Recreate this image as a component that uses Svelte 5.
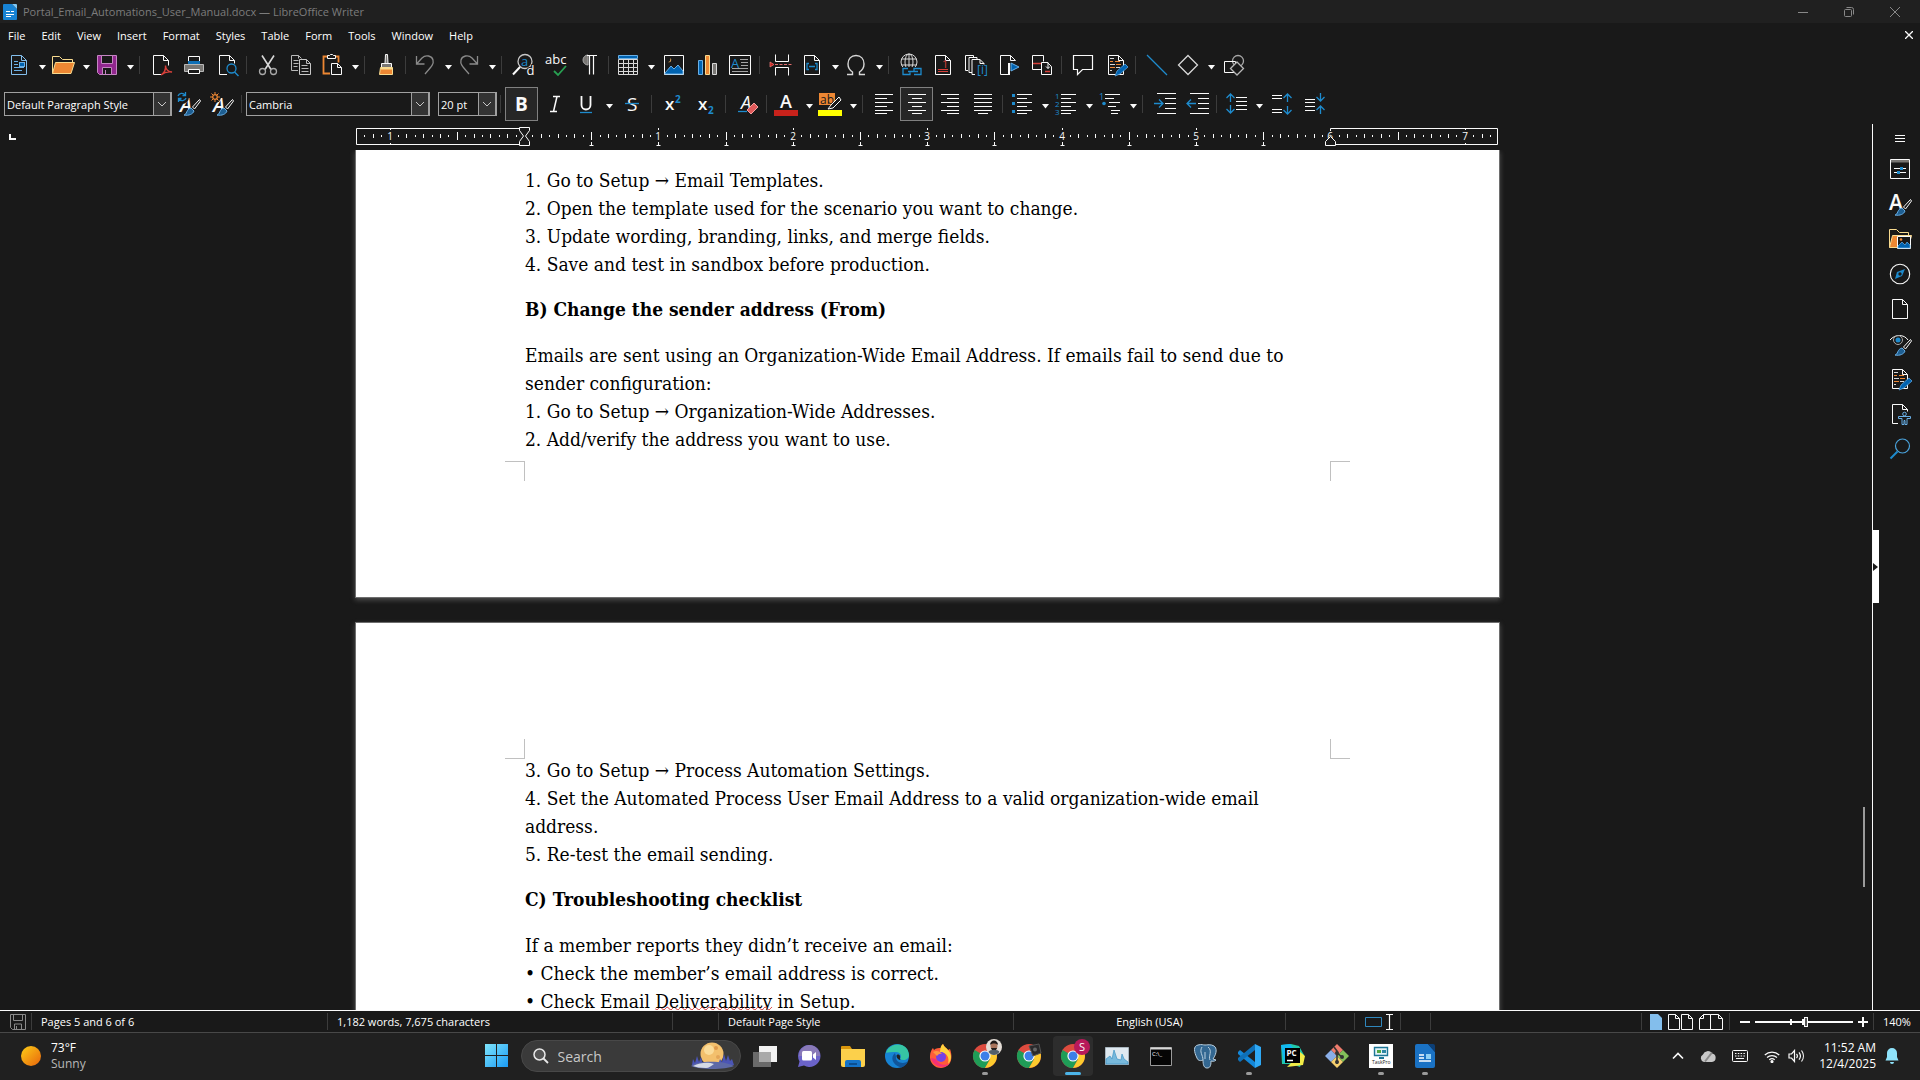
<script>
    const menus = ["File", "Edit", "View", "Insert", "Format", "Styles", "Table", "Form", "Tools", "Window", "Help"];

    const W = "#fafafa";
    const B = "#1e8bcd";
    const page = `<path d="M4.5 2.5h10l5 5v14h-15z M14.5 2.5v5h5" fill="none" stroke="${W}"/>`;
    const brush = `<path d="M22.5 7.5l-7 7.5 2 2 6-8z" fill="#191919" stroke="${W}"/><path d="M7 23c3 0 2-6 7-7l3 3c-1 3-5 5-10 4z" fill="#1e5f92" stroke="#69afe5"/>`;
    const lines = (rows) =>
        `<path d="${rows.map(([x, y, w]) => `M${x} ${y}h${w}`).join("")}" stroke="${W}" stroke-width="1.2"/>`;
    const pencil = `<path d="M11 23l2-5 8-7 3 3-8 7z" fill="#0063b1" stroke="#5aa3dc" stroke-width=".8"/>`;
    const letter = (t, x, y, size, extra = "") =>
        `<text x="${x}" y="${y}" font-size="${size}" fill="${W}" font-family="Open Sans, sans-serif" ${extra}>${t}</text>`;
    const chrome = `<circle cx="12" cy="12" r="12" fill="#dd4b3e"/><path d="M12 12L1.6 6A12 12 0 0 0 12 24l5-9z" fill="#1f9d57"/><path d="M12 7h10.9A12 12 0 0 1 12 24l5.2-9z" fill="#fdcb2e"/><circle cx="12" cy="12" r="5.6" fill="#fff"/><circle cx="12" cy="12" r="4.5" fill="#3d7fe8"/>`;

    const icons = {
        newDoc: `<path d="M4.500 2.500h10l5 5v14h-15z M14.500 2.500v5h5" fill="none" stroke="#83beec"/><path d="M7 8.500h4M7 11.500h4M7 14.500h10M7 17.500h8" stroke="#69afe5"/><rect x="12.500" y="9.500" width="5" height="4" fill="#0063b1" stroke="#69afe5"/>`,
        open: `<path d="M1.500 20.500v-17h7l3 3h10v3" fill="none" stroke="#f8db8f"/><path d="M4.500 9.500h19l-3.500 11h-18.500z" fill="#ed8733" stroke="#f8db8f"/>`,
        save: `<path d="M2.500 2.500h19v19h-17l-2-2z" fill="#92278f" stroke="#c586c3"/><path d="M6.500 2.500h11v8h-11z" fill="#191919" stroke="#c586c3"/><path d="M7.500 14.500h9v7h-9z" fill="#191919" stroke="#c586c3"/><path d="M10.500 17v5" stroke="#c586c3"/>`,
        pdf: `<path d="M12 21.500h-7.500v-19h10l5 5v5M14.500 2.500v5h5" fill="none" stroke="${W}"/><path d="M12 22c3-2 5-5 4.500-9.500 0 4 3 6.500 6.500 6.500-4-.8-8 .5-11 3z" fill="none" stroke="#d8403a" stroke-width="1.400"/>`,
        print: `<path d="M6.500 9v-5.500h11v5.500" fill="none" stroke="${W}"/><path d="M6 8h12v3h-12z" fill="#0f6fb5"/><path d="M2.500 11.500h19v7h-19z" fill="#797774" stroke="#b8b8b8"/><path d="M6.500 16.500h11v4h-11z" fill="#191919" stroke="${W}"/>`,
        preview: `<path d="M12 21.500h-7.500v-19h10l5 5v3M14.500 2.500v5h5" fill="none" stroke="${W}"/><circle cx="16.500" cy="15.500" r="4.500" fill="none" stroke="${B}" stroke-width="1.300"/><path d="M19.500 19l4 4" stroke="${B}" stroke-width="1.500"/>`,
        cut: `<path d="M6 2.500l9 14M18 2.500l-9 14" stroke="#d8d8d8" stroke-width="1.600"/><circle cx="6.500" cy="18.500" r="3" fill="none" stroke="#a8a8a8" stroke-width="1.300"/><circle cx="17.500" cy="18.500" r="3" fill="none" stroke="#a8a8a8" stroke-width="1.300"/>`,
        copy: `<path d="M9 17.500h-6.500v-15h7l3 3M4.500 7.500h5M4.500 10.500h5M4.500 13.500h4M9.500 2.500v3" fill="none" stroke="#b8b8b8"/><path d="M10.500 6.500h7l4 4v11h-11z" fill="#191919" stroke="#c8c8c8"/><path d="M17.500 6.500v4h4M12.500 12.500h6M12.500 15.500h7M12.500 18.500h7" stroke="#b8b8b8" fill="none"/>`,
        paste: `<path d="M10 20.500h-6.500v-17h15v6" fill="none" stroke="#ed8733" stroke-width="1.800"/><path d="M7.500 5.500v-3h2l1-1h2l1 1h2v3z" fill="#191919" stroke="${W}"/><path d="M11.500 10.500h6l4 4v7h-10z" fill="#191919" stroke="${W}"/><path d="M17.500 10.500v4h4" fill="none" stroke="${W}"/>`,
        clone: `<path d="M11.500 1.500h2l.5 9h-3z" fill="#797774" stroke="${W}"/><path d="M7.500 10.500h10v4h-10z" fill="#797774" stroke="${W}"/><path d="M6.500 14.500h12v7h-13z" fill="#ed8733" stroke="#f8db8f"/><path d="M7 15.500h11" stroke="#f8db8f" stroke-width="2"/>`,
        undo: `<path d="M3.500 3v8h8M4 10.500l5-5.500c4-4 10-2 11 2 1 4-1 6-8 14" fill="none" stroke="#8a8a8a" stroke-width="1.300"/>`,
        redo: `<path d="M20.500 3v8h-8M20 10.500l-5-5.500c-4-4-10-2-11 2-1 4 1 6 8 14" fill="none" stroke="#8a8a8a" stroke-width="1.300"/>`,
        find: `<circle cx="14" cy="8.500" r="7" fill="none" stroke="#c8c8c8" stroke-width="1.300"/><path d="M9 14l-7 7.500" stroke="${W}" stroke-width="2"/>${letter("a", 10, 13, 13, `style="fill:${B}"`)}${letter("d", 15.5, 22, 13, 'stroke="#191919" stroke-width="2" paint-order="stroke"')}`,
        spell: `${letter("abc", 1, 11, 13)}<path d="M10 18l4 4 8-9" fill="none" stroke="#28a052" stroke-width="1.800"/>`,
        pilcrow: `<path d="M11 12a5 5 0 0 1 0-10z" fill="#797774" stroke="#a8a8a8"/><path d="M10 2.500h10M12.500 2.500v19M16.500 2.500v19" stroke="${W}" stroke-width="1.200"/>`,
        table: `<path d="M2.500 2.500h19v3h-19z" fill="#0063b1" stroke="#69afe5"/><path d="M2.500 6.500h19v15h-19zM2.500 10.500h19M2.500 14.500h19M2.500 18.500h19M7.500 6.500v15M12.500 6.500v15M17.500 6.500v15" fill="none" stroke="#d8d8d8"/>`,
        image: `<path d="M2.500 2.500h19v19h-19z" fill="none" stroke="${W}"/><path d="M3 20l6-7 3 3 4-4 5 6v3h-18z" fill="#0063b1" stroke="#69afe5"/><path d="M8 5a2.200 2.200 0 1 1-2 4c2 0 3-2 2-4z" fill="#f0b05a"/>`,
        chart: `<path d="M3.500 7.500h4v14h-4z" fill="#0063b1" stroke="#69afe5"/><path d="M10.500 2.500h4v19h-4z" fill="#ed8733" stroke="#f8db8f"/><path d="M17.500 10.500h4v11h-4z" fill="#797774" stroke="#d8d8d8"/>`,
        textBox: `<path d="M1.500 2.500h21v19h-21z" fill="none" stroke="${W}"/>${letter("A", 3, 15, 13, `style="fill:${B}"`)}<path d="M12 6.500h8M13 9.500h7M13 12.500h7M4 15.500h16M4 18.500h16" stroke="#c8c8c8" stroke-width=".8"/>`,
        pageBreak: `<path d="M6.500 1.500v7h13v-7M6.500 22.500v-8h13v8" fill="none" stroke="${W}"/><path d="M6 11.500h17" stroke="#e06c6c" stroke-dasharray="3 1.500"/><path d="M1 9l4 2.500-4 2.500z" fill="#c8221b" stroke="#f08080" stroke-width=".7"/>`,
        field: `${page}<path d="M9 10.500h-2v6h2M15 10.500h2v6h-2M9 13.500h6" fill="none" stroke="${B}" stroke-width="1.300"/>`,
        omega: `<path d="M3 21.500h5.500v-2.500c-3-2-4.500-4.500-4.500-8 0-5 3-8.500 8-8.500s8 3.500 8 8.500c0 3.500-1.500 6-4.500 8v2.500h5.500" fill="none" stroke="#d8d8d8" stroke-width="1.400"/>`,
        link: `<g fill="none" stroke="#d8d8d8"><circle cx="11" cy="9" r="8"/><ellipse cx="11" cy="9" rx="4" ry="8"/><path d="M3.500 6h15M3.500 12h15M11 1v16"/></g><path d="M4 14h20v9h-20z" fill="#191919"/><path d="M10 15.500h-5v6h7v-2M10 18.500h10M18 15.500h5v6h-7M16 18v-2.500h2" fill="none" stroke="${B}" stroke-width="1.300"/>`,
        footnote: `${page}${letter("1", 11, 15, 11, 'style="fill:#d8403a"')}<path d="M7 16.500h10M7 18.500h10" stroke="#d8403a"/>`,
        endnote: `<path d="M4 17.500h-2.500v-15h8v2M8 19.500h-3v-15h8v2" fill="none" stroke="${W}"/><path d="M11 21.500h-3v-15h8l4 4v1M16 6.500v4h4" fill="none" stroke="${W}"/>${letter("[i]", 13, 21, 12, `style="fill:${B}"`)}`,
        bookmark: `<path d="M12 21.500h-8.500v-19h10l5 5M13.500 2.500v5h5" fill="none" stroke="${W}"/><path d="M12 10v12" stroke="${W}" stroke-width="2"/><path d="M14 10l8 4-8 4z" fill="#0063b1" stroke="#69afe5"/>`,
        crossRef: `<path d="M12 16.500h-9.500v-14h11v6" fill="none" stroke="${W}"/><path d="M3 10.500h8M15 18.500h5" stroke="#d8403a" stroke-width="1.300"/><path d="M11.500 21.500v-12h6l4 4v8z" fill="none" stroke="${W}"/><path d="M14 9.500h4v6M16 13.500l2 2 2-2" fill="none" stroke="${W}"/>`,
        comment: `<path d="M2.500 2.500h19v14h-10l-5 5v-5h-4z" fill="none" stroke="${W}" stroke-width="1.200"/>`,
        track: `${page}<path d="M6 5.500h4M6 11.500h5M6 17.500h2M12 14.500h4" stroke="#d8d8d8"/><path d="M11 8.500h5M6 8.500h3M6 14.500h5M12 11.500h5" stroke="#ed8733"/>${pencil}`,
        line: `<path d="M2 2l20 20" stroke="${B}" stroke-width="1.300"/>`,
        diamond: `<path d="M12 2.500l9.500 9.500-9.500 9.500-9.500-9.500z" fill="none" stroke="#d8d8d8" stroke-width="1.300"/>`,
        shapes: `<circle cx="16" cy="8" r="5.500" fill="none" stroke="#a8a8a8" stroke-width="1.300"/><path d="M2.500 8.500h11v11h-11z" fill="none" stroke="${W}"/><path d="M15 9l6.500 6.500-6.500 6.500-6.500-6.500z" fill="#191919" stroke="#b8b8b8" stroke-width="1.300"/>`,

        updateStyle: `${letter("A", 3, 20, 20, 'font-weight="600" font-style="italic"')}<circle cx="5" cy="5" r="7" fill="#191919"/><path d="M1 4a4 4 0 0 1 7-1M9 6a4 4 0 0 1-7 1M8.500 0v3.500h-3M1.500 10v-3.500h3" fill="none" stroke="${B}" stroke-width="1.300"/>${brush}`,
        newStyle: `${letter("A", 3, 20, 20, 'font-weight="600" font-style="italic"')}<circle cx="5" cy="5" r="6" fill="#191919"/><circle cx="5" cy="5" r="2.300" fill="none" stroke="#ed8733" stroke-width="1.300"/><path d="M5 0v2M5 8v2M0 5h2M8 5h2M1.500 1.500l1.500 1.500M7 7l1.500 1.500M8.500 1.500l-1.500 1.500M3 7l-1.500 1.500" stroke="#ed8733"/>${brush}`,
        bold: letter("B", 5, 19, 19, 'font-weight="700"'),
        italic: `<path d="M10 4.500h7M7 19.500h7M14 4.500l-3.500 15" stroke="${W}" stroke-width="1.500" fill="none"/>`,
        underline: `<path d="M7.500 4v9c0 6 9 6 9 0v-9" fill="none" stroke="${W}" stroke-width="1.800"/><path d="M6 20.500h12" stroke="${B}" stroke-width="1.300"/>`,
        strike: `${letter("S", 7, 19, 19)}<path d="M5 11.500h14" stroke="${B}" stroke-width="1.300"/>`,
        sup: `${letter("x", 4, 18, 17, 'font-weight="600"')}${letter("2", 14, 11, 10, `style="fill:${B}" font-weight="700"`)}`,
        sub: `${letter("x", 4, 18, 17, 'font-weight="600"')}${letter("2", 14, 22, 10, `style="fill:${B}" font-weight="700"`)}`,
        clear: `${letter("A", 6, 17, 18, 'font-style="italic"')}<path d="M3 19.500h9" stroke="${B}" stroke-width="1.300"/><path d="M12 18l7-7 4 4-7 7z" fill="#e05a5a" stroke="#f4a0a0"/>`,
        fontColor: `${letter("A", 6, 16, 18, 'font-weight="600"')}<path d="M0 18h24v6h-24z" fill="#c8221b"/>`,
        highlight: `<path d="M1 1h16v12h-16z" fill="#ed8733"/>${letter("ab", 2, 12, 12, 'style="fill:#191919"')}<path d="M21 5l-8 8-3 4 5-1 8-8z" fill="#191919" stroke="${W}"/><path d="M0 18h24v6h-24z" fill="#ffff00"/>`,
        alignLeft: lines([[3, 2.5, 18], [3, 6.5, 12], [3, 10.5, 18], [3, 14.5, 12], [3, 18.5, 18], [3, 21.5, 12]]),
        alignCenter: lines([[3, 2.5, 18], [7, 6.5, 10], [3, 10.5, 18], [7, 14.5, 10], [3, 18.5, 18], [7, 21.5, 10]]),
        alignRight: lines([[3, 2.5, 18], [9, 6.5, 12], [3, 10.5, 18], [9, 14.5, 12], [3, 18.5, 18], [9, 21.5, 12]]),
        justify: lines([[3, 2.5, 18], [3, 6.5, 18], [3, 10.5, 18], [3, 14.5, 18], [3, 18.5, 18], [7, 21.5, 10]]),
        bullets: `<path d="M2 2h3v3h-3zM2 10h3v3h-3zM2 18h3v3h-3z" fill="${B}"/>${lines([[7, 2.5, 15], [7, 6.5, 10], [7, 10.5, 15], [7, 14.5, 10], [7, 18.5, 15], [7, 21.5, 10]])}`,
        numbering: `${letter("1", 1, 7, 8, `style="fill:${B}"`)}${letter("2", 1, 15, 8, `style="fill:${B}"`)}${letter("3", 1, 23, 8, `style="fill:${B}"`)}${lines([[7, 2.5, 15], [7, 6.5, 10], [7, 10.5, 15], [7, 14.5, 10], [7, 18.5, 15], [7, 21.5, 10]])}`,
        outline: `${letter("1", 1, 8, 9, `style="fill:${B}"`)}<circle cx="6" cy="11.500" r="1.800" fill="${B}"/>${lines([[7, 2.5, 15], [7, 6.5, 9], [11, 10.5, 11], [10, 14.5, 8], [13, 18.5, 9], [13, 21.5, 7]])}`,
        indent: `${lines([[5, 1.5, 19], [13, 6.5, 11], [13, 11.5, 11], [13, 16.5, 11], [5, 21.5, 19]])}<path d="M2 11.500h9M7 7.500l4 4-4 4" fill="none" stroke="${B}" stroke-width="1.300"/>`,
        outdent: `${lines([[5, 1.5, 19], [13, 6.5, 11], [13, 11.5, 11], [13, 16.5, 11], [5, 21.5, 19]])}<path d="M2 11.500h9M6 7.500l-4 4 4 4" fill="none" stroke="${B}" stroke-width="1.300"/>`,
        lineSpacing: `${lines([[12, 5.5, 11], [12, 9.5, 11], [12, 13.5, 11], [12, 17.5, 11]])}<path d="M6.500 2v8M2.500 6l4-4 4 4M6.500 13v8M2.500 17l4 4 4-4" fill="none" stroke="${B}" stroke-width="1.300"/>`,
        spaceMore: `${lines([[2, 3.5, 10], [2, 6.5, 10], [2, 17.5, 10], [2, 20.5, 10]])}<path d="M17.500 2v8M13.500 6l4-4 4 4M17.500 14v8M13.500 18l4 4 4-4" fill="none" stroke="${B}" stroke-width="1.300"/>`,
        spaceLess: `${lines([[2, 7.5, 10], [2, 10.5, 10], [2, 14.5, 10], [2, 18.5, 10]])}<path d="M17.500 1v8M13.500 5l4 4 4-4M17.500 14v8M13.500 18l4-4 4 4" fill="none" stroke="${B}" stroke-width="1.300"/>`,

        properties: `<path d="M2.500 2.500h19v19h-19z" fill="none" stroke="${W}"/><path d="M3 3h18v2.500h-18z" fill="#797774"/><path d="M6 11.500h12M6 15.500h12" stroke="${W}"/><path d="M12 10h3v3h-3zM9 14h3v3h-3z" fill="${B}"/>`,
        styles: `${letter("A", 1, 18, 21, 'font-weight="600"')}${brush}`,
        gallery: `<path d="M1.500 20.500v-18h7l3 3h9v3" fill="none" stroke="#f8db8f"/><path d="M4.500 8.500h19l-3 12h-19z" fill="#ed8733" stroke="#f8db8f"/><path d="M9.500 9.500h13v12h-13z" fill="#191919" stroke="${W}"/><path d="M10 19l4-4 3 3 2-3 3 3v3h-12z" fill="#0063b1" stroke="#69afe5" stroke-width=".7"/><circle cx="13" cy="12.500" r="1.300" fill="#ed8733"/>`,
        navigator: `<circle cx="12" cy="12" r="9.700" fill="none" stroke="${W}" stroke-width="1.100"/><path d="M17 7l-3 7-7 3 2-7z" fill="#1e8bcd"/><circle cx="12" cy="12" r="1.700" fill="#191919"/>`,
        pageIcon: page,
        inspector: `<path d="M2 8c5-6 14-6 18 0" fill="none" stroke="${W}"/><circle cx="10" cy="8" r="4.500" fill="none" stroke="#a8a8a8"/><circle cx="10" cy="8" r="2.500" fill="${B}"/>${brush}`,
        access: `<path d="M10 21.500h-5.500v-19h10l5 5v2M14.500 2.500v5h5" fill="none" stroke="${W}"/><circle cx="16.500" cy="12" r="1.800" fill="#191919" stroke="#69afe5"/><path d="M10.500 14.500h12v2h-3.500v6h-2v-4h-1v4h-2v-6h-3.500z" fill="#191919" stroke="#69afe5"/>`,
        search: `<circle cx="14.500" cy="9" r="7" fill="none" stroke="#4aa3dc" stroke-width="1.200"/><path d="M9.500 14.500l-7 7" stroke="${B}" stroke-width="2"/>`,

        taskView: `<path d="M0 8h18v15h-18z" fill="#6a6a6a"/><path d="M6 2h18v16h-18z" fill="#f2f2f2"/><path d="M6 8h12v10h-12z" fill="#a9a9a9"/>`,
        chat: `<path d="M12 1a11 11 0 1 1-5 20.500l-6 1.500 1.500-5.500a11 11 0 0 1 9.500-16.500z" fill="#6b63c9"/><path d="M12 1a11 11 0 0 1 11 11h-21a11 11 0 0 1 10-11z" fill="#8a7ab8"/><rect x="5" y="7" width="10" height="9.500" rx="1.500" fill="#fff"/><path d="M16 10.500l3-2.500v8l-3-2.500z" fill="#fff"/>`,
        explorer: `<path d="M0 3a1 1 0 0 1 1-1h8l2 3h-11z" fill="#d9960c"/><path d="M0 5h24v16a2 2 0 0 1-2 2h-20a2 2 0 0 1-2-2z" fill="#fcd04b"/><path d="M4 23v-5a2 2 0 0 1 2-2h12a2 2 0 0 1 2 2v5z" fill="#1473c8"/><path d="M8 19h8v2h-8z" fill="#0b4f91"/>`,
        edge: `<circle cx="12" cy="12" r="12" fill="#1783d4"/><path d="M1 9c3-11 22-12 23 2 0 5-6 6-9 4 2-2 1-7-4-7-4 0-8 0-10 1z" fill="#36c6a4"/><path d="M10 9c-5 4-3 12 6 14.500 3-.8 6-3 7-6-5 3-13 1-12-5z" fill="#10559a"/><path d="M11.500 12c0-2 3-2 3.500 0s-.5 3 .5 4c-2 0-4-2-4-4z" fill="#202020"/>`,
        firefox: `<path d="M12 24a11 11 0 0 1-11-12c0-4 2-7 3-8l1 2c2-2 5-2 7-2 0-2 1-3 2-4 1 3 4 4 5 6l2-1c3 8 2 18-9 19z" fill="#ff5c38"/><path d="M14 0c1 3 4 4 5 6 4 4 4 10 0 14 2-7-2-12-8-11 0-5 1-8 3-9z" fill="#ffd23c"/><path d="M2 14c2 9 14 12 19 5-5 4-12 1-14-4z" fill="#f52f78"/><circle cx="12" cy="13" r="5" fill="#7542e5"/><path d="M4 8c3-2 7-1 9 2-3-1-4 1-5 2z" fill="#ff9640"/>`,
        chromeUser: `${chrome}<circle cx="21" cy="3" r="8" fill="#e4ddd6"/><circle cx="21" cy="2" r="3.500" fill="#a9745b"/><path d="M17 1c0-6 8-6 8 0-2-2-6-2-8 0zM18 4c1 4 5 4 6 0z" fill="#201a18"/><path d="M15.500 8c1-3 10-3 11 0-3 4-8 4-11 0z" fill="#53606a"/>`,
        chromeBox: `${chrome}<path d="M12 2l10-2 2 9-8 3z" fill="#2a2a2c" stroke="#555"/><circle cx="18" cy="5.500" r="2" fill="#666"/>`,
        chromeS: `${chrome}<circle cx="21" cy="3" r="8" fill="#b8195a"/>${letter("S", 18, 7, 11)}`,
        perf: `<path d="M.5 3.500h23v17h-23z" fill="#dfe9f0" stroke="#a9b6bf"/><path d="M1 20v-5l4-3 2 3 2-9 3 9 4 1 1-6 2 5 4 3v2z" fill="#78b9dc" stroke="#3d93c4" stroke-width=".7"/>`,
        cmd: `<path d="M1.500 3.500h21v18h-21z" fill="#050505" stroke="#9a9a9a"/><path d="M1.500 3.500h21v2h-21z" fill="#d8d8d8"/>${letter("C:\\_", 3, 12, 6)}`,
        postgres: `<path d="M5 1c4-1 5 0 7 0s6-1 9 1 3 7-1 13l3 1c-2 2-4 1-5 1 0 5-1 7-4 7s-4-3-4-8c-2 1-5 1-6-2-3-6-4-12 1-13z" fill="#336791" stroke="#b9cfdf"/><path d="M9 3c-3 5 1 8 1 13M15 3c5 4 0 9 2 13M12 8v7" fill="none" stroke="#b9cfdf"/>`,
        vscode: `<path d="M1 8l2-2 15 12v6l-17-14z" fill="#1387d8"/><path d="M1 16l2 2 15-12v-6l-17 14z" fill="#0e70b8"/><path d="M18 0l6 3v18l-6 3z" fill="#2fa9f5"/>`,
        pycharm: `<path d="M0 1l10-1 8 2 5 9-4 12-9-3-9 0z" fill="#21c9a8"/><path d="M0 1l9-1 4 5-10 14z" fill="#12b8f0"/><path d="M19 8l5 4-2 9-16 2 4-4z" fill="#f2ec47"/><path d="M4 4h15v15h-15z" fill="#000"/>${letter("PC", 5.5, 12, 8, 'font-weight="700"')}<path d="M6 16.500h6" stroke="#fff" stroke-width="1.500"/>`,
        git: `<path d="M12 0l6 6-6 6-6-6z" fill="#ee7b6c"/><path d="M6 6l6 6-6 6-6-6z" fill="#8aaee8"/><path d="M18 6l6 6-6 6-6-6z" fill="#83c05a"/><path d="M12 12l6 6-6 6-6-6z" fill="#f5cf6d"/><path d="M9 3l3 4v13M12 9l5 4" stroke="#333" stroke-width="1.600" fill="none"/><circle cx="12" cy="9" r="2" fill="#333"/><circle cx="12" cy="18" r="2" fill="#333"/><circle cx="17" cy="13" r="2" fill="#333"/>`,
        taskPro: `<path d="M0 0h24v24h-24z" fill="#fff"/><path d="M5.500 3.500h13v8h-13z" fill="#e4f3f7" stroke="#1d7696" stroke-width="1.400"/><path d="M8 6h4v3h-4z" fill="#52a744"/><path d="M13 6h4v3h-4z" fill="#2d86a4"/><path d="M10 14h5" stroke="#1d7696" stroke-width="2"/><text x="3" y="20" font-size="5" font-family="Open Sans, sans-serif" fill="#222">TaskPro</text>`,
        writer: `<path d="M2 2a2 2 0 0 1 2-2h11l7 8v14a2 2 0 0 1-2 2h-16a2 2 0 0 1-2-2z" fill="#1a72c4"/><path d="M15 0h5a2 2 0 0 1 2 2v6z" fill="#0c3f77"/><path d="M6 11h5M6 14h5M6 17h12" stroke="#fff" stroke-width="1.500"/><path d="M13 10h5v5h-5z" fill="#8fd0f5"/>`,
    };

    const sep = { sep: true };
    const item = (icon, label, opts = {}) => ({ icon, label, ...opts });
    const drop = { drop: true };

    const standardBar = [
        item("newDoc", "New", drop), item("open", "Open", drop), item("save", "Save", drop), sep,
        item("pdf", "Export as PDF"), item("print", "Print"), item("preview", "Print Preview"), sep,
        item("cut", "Cut"), item("copy", "Copy"), item("paste", "Paste", drop), sep,
        item("clone", "Clone Formatting"), sep,
        item("undo", "Undo", drop), item("redo", "Redo", drop), sep,
        item("find", "Find and Replace"), item("spell", "Spelling"), item("pilcrow", "Formatting Marks"), sep,
        item("table", "Insert Table", drop), item("image", "Insert Image"), item("chart", "Insert Chart"), item("textBox", "Insert Text Box"), sep,
        item("pageBreak", "Insert Page Break"), item("field", "Insert Field", drop), item("omega", "Special Character", drop), sep,
        item("link", "Insert Hyperlink"), item("footnote", "Insert Footnote"), item("endnote", "Insert Endnote"), item("bookmark", "Insert Bookmark"), item("crossRef", "Insert Cross-reference"), sep,
        item("comment", "Insert Comment"), item("track", "Track Changes"), sep,
        item("line", "Insert Line"), item("diamond", "Basic Shapes", drop), item("shapes", "Show Draw Functions"),
    ];

    const formatBar = [
        item("bold", "Bold", { active: true }), item("italic", "Italic"), item("underline", "Underline", drop), item("strike", "Strikethrough"), sep,
        item("sup", "Superscript"), item("sub", "Subscript"), sep,
        item("clear", "Clear Formatting"), sep,
        item("fontColor", "Font Color", drop), item("highlight", "Highlighting", drop), sep,
        item("alignLeft", "Align Left"), item("alignCenter", "Align Center", { active: true }), item("alignRight", "Align Right"), item("justify", "Justified"), sep,
        item("bullets", "Bullets", drop), item("numbering", "Numbering", drop), item("outline", "Outline", drop), sep,
        item("indent", "Increase Indent"), item("outdent", "Decrease Indent"), sep,
        item("lineSpacing", "Line Spacing", drop), item("spaceMore", "Increase Paragraph Spacing"), item("spaceLess", "Decrease Paragraph Spacing"),
    ];

    const styleBar = [item("updateStyle", "Update Style"), item("newStyle", "New Style")];

    const sidebar = [
        ["properties", "Properties"], ["styles", "Styles"], ["gallery", "Gallery"], ["navigator", "Navigator"],
        ["pageIcon", "Page"], ["inspector", "Style Inspector"], ["track", "Manage Changes"],
        ["access", "Accessibility Check"], ["search", "Find"],
    ];

    const apps = [
        ["taskView", "Task View"], ["chat", "Chat"], ["explorer", "File Explorer"], ["edge", "Edge"],
        ["firefox", "Firefox"], ["chromeUser", "Chrome", "run"], ["chromeBox", "Chrome"], ["chromeS", "Chrome", "current"],
        ["perf", "Performance Monitor"], ["cmd", "Command Prompt"], ["postgres", "pgAdmin"], ["vscode", "VS Code", "run"],
        ["pycharm", "PyCharm"], ["git", "Git"], ["taskPro", "TaskPro", "run"], ["writer", "LibreOffice Writer", "run"],
    ];

    // Ruler: 134.4px per inch at 140%, sixteen ticks to the inch
    const inch = 134.4;
    const zero = 168;
    const ticks = [];
    for (let i = -19; i <= 115; i++) {
        if (i === 0 || i === 96) continue;
        const x = Math.round(zero + (i * inch) / 16) + 0.5;
        ticks.push({ x, kind: i % 16 === 0 ? "inch" : i % 8 === 0 ? "half" : i % 2 === 0 ? "eighth" : "dot" });
    }
    const numbers = [-1, 1, 2, 3, 4, 5, 6, 7].map((n) => ({ n: Math.abs(n), x: Math.round(zero + n * inch) }));
    const tabs = Array.from({ length: 11 }, (_, i) => Math.round(zero + ((i + 1) * inch) / 2) + 0.5);

    let zoom = 52;
</script>

{#snippet glyph(name)}
    <svg class="glyph" width="24" height="24" viewBox="0 0 24 24" aria-hidden="true">{@html icons[name]}</svg>
{/snippet}

{#snippet tools(items)}
    {#each items as t}
        {#if t.sep}
            <span class="sep"></span>
        {:else if t.drop}
            <div class="split">
                <button class="split-main" aria-label={t.label}>{@render glyph(t.icon)}</button>
                <button class="split-arrow" aria-label="{t.label} options">
                    <svg width="7" height="5" viewBox="0 0 7 5"><path d="M0 0h7l-3.500 4.500z" fill="#fafafa" /></svg>
                </button>
            </div>
        {:else}
            <button class="tool" class:active={t.active} aria-label={t.label}>{@render glyph(t.icon)}</button>
        {/if}
    {/each}
{/snippet}

{#snippet chevron()}
    <span class="combo-arrow">
        <svg width="10" height="6" viewBox="0 0 10 6"><path d="M1 1l4 4 4-4" fill="none" stroke="#c8c8c8" /></svg>
    </span>
{/snippet}

<div class="window">
    <header class="titlebar">
        <svg class="app-icon" width="16" height="18" viewBox="0 0 16 18">
            <path d="M1 2a1 1 0 0 1 1-1h8l5 5v10a1 1 0 0 1-1 1h-12a1 1 0 0 1-1-1z" fill="#1783d4" />
            <path d="M10 1h4a1 1 0 0 1 1 1v4z" fill="#7fc8f5" />
            <path d="M4 8.500h4M4 11.500h8M4 13.500h5M9 8.500h3" stroke="#fff" />
        </svg>
        <span class="title">Portal_Email_Automations_User_Manual.docx — LibreOffice Writer</span>
        <div class="controls">
            <button aria-label="Minimize"><svg width="10" height="10"><path d="M0 5.500h10" stroke="#888" /></svg></button>
            <button aria-label="Restore">
                <svg width="10" height="10" fill="none" stroke="#888"><rect x=".5" y="2.500" width="7" height="7" rx="1" /><path d="M2.500.500h5a2 2 0 0 1 2 2v5" /></svg>
            </button>
            <button aria-label="Close"><svg width="10" height="10"><path d="M0 0l10 10M10 0l-10 10" stroke="#888" /></svg></button>
        </div>
    </header>

    <nav class="menubar">
        {#each menus as m}
            <button>{m}</button>
        {/each}
        <button class="doc-close" aria-label="Close document">
            <svg width="8" height="8"><path d="M0 0l8 8M8 0l-8 8" stroke="#fafafa" stroke-width="1.300" /></svg>
        </button>
    </nav>

    <div class="toolbar">{@render tools(standardBar)}</div>

    <div class="toolbar formatting">
        <div class="combo style-combo">
            <select aria-label="Paragraph style"><option>Default Paragraph Style</option></select>
            {@render chevron()}
        </div>
        {@render tools(styleBar)}
        <span class="sep"></span>
        <div class="combo font-combo">
            <select aria-label="Font name"><option>Cambria</option></select>
            {@render chevron()}
        </div>
        <div class="combo size-combo">
            <select aria-label="Font size"><option>20 pt</option></select>
            {@render chevron()}
        </div>
        <span class="sep"></span>
        {@render tools(formatBar)}
    </div>

    <div class="workspace">
        <main class="editor">
            <div class="ruler">
                <svg class="tab-type" width="7" height="6"><path d="M1 0v5h6" fill="none" stroke="#fafafa" stroke-width="2" /></svg>
                <svg class="scale" width="1143" height="26" viewBox="0 0 1143 26">
                    <path d="M169 4.500h-168.500v16h168.500M974.500 20.500h167v-16h-167v10" fill="none" stroke="#fafafa" />
                    {#each ticks as t}
                        {#if t.kind === "inch"}
                            <path d="M{t.x} 4v2M{t.x} 19v2" stroke="#fafafa" />
                        {:else if t.kind === "half"}
                            <path d="M{t.x} 8v8" stroke="#fafafa" />
                        {:else if t.kind === "eighth"}
                            <path d="M{t.x} 10v4" stroke="#fafafa" />
                        {:else}
                            <path d="M{t.x} 11v2" stroke="#fafafa" />
                        {/if}
                    {/each}
                    {#each numbers as n}
                        <text x={n.x} y="16" class="num">{n.n}</text>
                    {/each}
                    {#each tabs as x}
                        <path d="M{x} 18v3M{x - 2} 21.500h4" stroke="#fafafa" />
                    {/each}
                    <path d="M163.500 3.500h10v3l-4 5.500 4 5.500v4h-10v-4l4-5.500-4-5.500z" fill="#191919" stroke="#fafafa" />
                    <path d="M969.500 21.500v-4l5-5 5 5v4z" fill="#191919" stroke="#fafafa" />
                </svg>
            </div>

            <div class="pages">
                <article class="sheet first">
                    <div class="text">
                        <p>
                            1. Go to Setup → Email Templates.<br />
                            2. Open the template used for the scenario you want to change.<br />
                            3. Update wording, branding, links, and merge fields.<br />
                            4. Save and test in sandbox before production.
                        </p>
                        <h2>B) Change the sender address (From)</h2>
                        <p>
                            Emails are sent using an Organization-Wide Email Address. If emails fail to send due to<br />
                            sender configuration:<br />
                            1. Go to Setup → Organization-Wide Addresses.<br />
                            2. Add/verify the address you want to use.
                        </p>
                    </div>
                    <div class="marks bottom"><span></span><span></span></div>
                </article>
                <article class="sheet second">
                    <div class="marks top"><span></span><span></span></div>
                    <div class="text">
                        <p>
                            3. Go to Setup → Process Automation Settings.<br />
                            4. Set the Automated Process User Email Address to a valid organization-wide email<br />
                            address.<br />
                            5. Re-test the email sending.
                        </p>
                        <h2>C) Troubleshooting checklist</h2>
                        <p>
                            If a member reports they didn’t receive an email:<br />
                            • Check the member’s email address is correct.<br />
                            • Check Email <span class="misspelt">Deliverability</span> in Setup.
                        </p>
                    </div>
                </article>
                <div class="scroll-thumb"></div>
            </div>
        </main>

        <aside class="sidebar">
            <button class="grip" aria-label="Hide sidebar"><svg width="5" height="8"><path d="M0 0l5 4-5 4z" fill="#191919" /></svg></button>
            <button class="deck-menu" aria-label="Sidebar settings"><svg width="10" height="8"><path d="M0 .500h10M0 3.500h10M0 6.500h10" stroke="#fafafa" /></svg></button>
            {#each sidebar as [icon, label]}
                <button class="deck" aria-label={label}>{@render glyph(icon)}</button>
            {/each}
        </aside>
    </div>

    <footer class="status">
        <span class="cell save-state">
            <svg width="16" height="16" fill="none" stroke="#8a8a8a"><path d="M.5.500h15v15h-13l-2-2zM3.500.500v6h9v-6M4.500 15v-5h7v5M6.500 12v3" /></svg>
        </span>
        <span class="cell">Pages 5 and 6 of 6</span>
        <span class="cell">1,182 words, 7,675 characters</span>
        <span class="cell"></span>
        <span class="cell">Default Page Style</span>
        <span class="cell center">English (USA)</span>
        <span class="cell"></span>
        <span class="cell insert-mode">
            <svg width="30" height="18" viewBox="0 0 30 18"><path d="M.5 4.500h16v9h-16z" fill="none" stroke="#2f87bd" /><path d="M21 1.500h7M21 16.500h7M24.500 2v14" stroke="#fafafa" stroke-width="1.200" /></svg>
        </span>
        <span class="cell"></span>
        <span class="cell"></span>
        <span class="cell views">
            <button aria-label="Single-page view"><svg width="12" height="16"><path d="M0 0h8l4 4v12h-12z" fill="#83beec" /></svg></button>
            <button aria-label="Multiple-page view">
                <svg width="25" height="16" fill="none" stroke="#fafafa"><path d="M.5.500h7l4 4v11h-11zM7.500.500v4h4M13.500.500h7l4 4v11h-11zM20.500.500v4h4" /></svg>
            </button>
            <button aria-label="Book view">
                <svg width="24" height="16" fill="none" stroke="#fafafa"><path d="M11.500.500h-7l-4 4v11h11zM4.500.500v4h-4M11.500.500h8l4 4v11h-12zM19.500.500v4h4" /></svg>
            </button>
        </span>
        <span class="cell zoom">
            <button aria-label="Zoom out"><svg width="10" height="10"><path d="M0 5h10" stroke="#fafafa" stroke-width="2" /></svg></button>
            <input type="range" aria-label="Zoom" min="0" max="100" bind:value={zoom} />
            <button aria-label="Zoom in"><svg width="10" height="10"><path d="M0 5h10M5 0v10" stroke="#fafafa" stroke-width="2" /></svg></button>
        </span>
        <span class="cell percent">140%</span>
    </footer>

    <div class="taskbar">
        <button class="weather">
            <svg width="20" height="20">
                <defs><linearGradient id="sun" x1="0" y1="0" x2="1" y2="1"><stop offset="0" stop-color="#fdcf17" /><stop offset="1" stop-color="#e8640c" /></linearGradient></defs>
                <circle cx="10" cy="10" r="10" fill="url(#sun)" />
            </svg>
            <span><b>73°F</b><small>Sunny</small></span>
        </button>

        <div class="dock">
            <button class="app" aria-label="Start">
                <svg width="24" height="24">
                    <defs><linearGradient id="win" x1="0" y1="0" x2="1" y2="1"><stop offset="0" stop-color="#7ee4fb" /><stop offset="1" stop-color="#1a9bf5" /></linearGradient></defs>
                    <path d="M0 0h11v11h-11zM12 0h11v11h-11zM0 12h11v11h-11zM12 12h11v11h-11z" fill="url(#win)" />
                </svg>
            </button>
            <label class="search">
                <svg width="16" height="16"><circle cx="6.500" cy="6.500" r="5.500" fill="#555" stroke="#e8e8e8" stroke-width="1.500" /><path d="M10.500 10.500l4.500 4.500" stroke="#e8e8e8" stroke-width="1.800" /></svg>
                <input type="text" placeholder="Search" aria-label="Search" />
                <svg width="44" height="28" viewBox="0 0 44 28">
                    <circle cx="21" cy="12" r="11.500" fill="#f3c06d" />
                    <circle cx="18" cy="8" r="5" fill="#fbdc9a" /><circle cx="25" cy="6" r="2" fill="#e09a4c" /><circle cx="27" cy="15" r="2" fill="#e3a558" />
                    <path d="M1 23l1-6 2 4 2-7 2 6 2-5 2 8zM27 23l2-6 2 3 2-8 2 7 2-6 2 6 2-2 2 6z" fill="#4b55b5" />
                    <path d="M0 24c8-6 34-5 43 0-9 4-34 4-43 0z" fill="#5d69a6" /><path d="M2 24c8-4 16-4 21-2-3 2-5 4-8 4-6 0-10-1-13-2z" fill="#d5dae6" />
                </svg>
            </label>
            {#each apps as [icon, label, state]}
                <button class="app {state ?? ''}" aria-label={label}>{@render glyph(icon)}</button>
            {/each}
        </div>

        <div class="tray">
            <button aria-label="Hidden icons"><svg width="12" height="8"><path d="M1 6.500l5-5 5 5" fill="none" stroke="#fafafa" stroke-width="1.600" /></svg></button>
            <button aria-label="OneDrive"><svg width="16" height="12"><path d="M4 12a4 4 0 0 1-1-7.500 5 5 0 0 1 9-1 4.300 4.300 0 0 1 0 8.500z" fill="#c8c8c8" /><path d="M5 11.500l7-9" stroke="#8a8a8a" stroke-width="2" /></svg></button>
            <button aria-label="Keyboard"><svg width="16" height="12" fill="none" stroke="#fafafa"><rect x=".5" y=".5" width="15" height="11" rx="1" /><path d="M3 3.500h10M3 6h10" stroke-dasharray="1.500 1.300" /><path d="M4 8.500h8" /></svg></button>
            <button class="net" aria-label="Network and sound">
                <svg width="16" height="13" fill="none" stroke="#fafafa" stroke-width="1.200"><path d="M.8 5a10.500 10.500 0 0 1 14.400 0M3 7.500a7.500 7.500 0 0 1 10 0M5.300 9.800a4 4 0 0 1 5.400 0" /><circle cx="8" cy="11.500" r="1" fill="#fafafa" /></svg>
                <svg width="17" height="14" fill="none" stroke="#fafafa" stroke-width="1.200"><path d="M1 5h2.500l3-3.500v11l-3-3.500h-2.500zM8.500 5a3 3 0 0 1 0 4M11 3.300a6 6 0 0 1 0 7.400M13.500 1.500a9 9 0 0 1 0 11" /></svg>
            </button>
            <button class="clock"><span>11:52 AM</span><span>12/4/2025</span></button>
            <button aria-label="Notifications"><svg width="14" height="16"><path d="M7 0a5 5 0 0 1 5 5v4l1.500 3.500h-13l1.500-3.500v-4a5 5 0 0 1 5-5zM5 14h4a2 2 0 0 1-4 0z" fill="#8fe3fb" /></svg></button>
        </div>
    </div>
</div>

<style>
    :global(body) {
        margin: 0;
        background: #191919;
    }

    .window {
        display: flex;
        flex-direction: column;
        height: 100vh;
        overflow: hidden;
        background: #191919;
        color: #fff;
        font-family: "Open Sans", "Noto Sans", sans-serif;
        font-size: 11px;
    }

    button {
        padding: 0;
        border: 0;
        background: none;
        color: inherit;
        font: inherit;
    }

    svg {
        display: block;
        flex: none;
    }

    .glyph {
        overflow: visible;
    }

    .titlebar {
        display: flex;
        align-items: center;
        height: 23px;
        padding-left: 2px;
        background: #202020;
        color: #7c7c7c;
    }

    .title {
        margin-left: 5px;
        white-space: nowrap;
    }

    .controls {
        display: flex;
        margin-left: auto;
        padding-right: 2px;
    }

    .controls button {
        display: grid;
        place-items: center;
        width: 46px;
        height: 20px;
    }

    .menubar {
        display: flex;
        height: 24px;
    }

    .menubar button {
        padding: 0 8px;
    }

    .menubar .doc-close {
        margin-left: auto;
        padding-right: 7px;
    }

    /* Toolbars */
    .toolbar {
        display: flex;
        align-items: center;
        height: 36px;
        padding-left: 4px;
    }

    .formatting {
        height: 34px;
        padding: 4px 0 3px 4px;
    }

    .tool {
        display: flex;
        align-items: center;
        flex: none;
        box-sizing: border-box;
        width: 33px;
        height: 34px;
        padding-left: 5px;
    }

    .active {
        padding-left: 4px;
        border: 1px solid #808080;
        background: #262626;
    }

    .split {
        display: flex;
        flex: none;
        height: 34px;
    }

    .split-main {
        display: flex;
        align-items: center;
        width: 29px;
        padding-left: 3px;
    }

    .split-arrow {
        display: flex;
        align-items: center;
        width: 15px;
        padding: 5px 0 0 6px;
    }

    .sep {
        flex: none;
        box-sizing: border-box;
        width: 8px;
        height: 18px;
        border-left: 1px solid #3c3c3c;
        margin-left: 3px;
        margin-right: -3px;
    }

    .combo {
        display: flex;
        flex: none;
        box-sizing: border-box;
        height: 24px;
        border: 1px solid #a0a0a0;
    }

    .combo select {
        flex: 1;
        min-width: 0;
        padding: 0 2px;
        border: 0;
        appearance: none;
        background: #191919;
        color: #fff;
        font: inherit;
    }

    .combo-arrow {
        display: grid;
        place-items: center;
        width: 16px;
        border: 1px solid #a0a0a0;
        border-width: 0 1px;
        background: #333;
    }

    .style-combo {
        width: 168px;
    }

    .font-combo {
        width: 184px;
    }

    .size-combo {
        width: 59px;
        margin-left: 8px;
    }

    /* Document area */
    .workspace {
        display: flex;
        flex: 1;
        min-height: 0;
    }

    .editor {
        display: flex;
        flex: 1;
        flex-direction: column;
        min-width: 0;
        border-right: 1px solid #fafafa;
    }

    .ruler {
        position: relative;
        display: flex;
        justify-content: center;
        flex: none;
        padding-right: 17px;
    }

    .tab-type {
        position: absolute;
        top: 10px;
        left: 9px;
    }

    .num {
        fill: #fafafa;
        font-size: 10px;
        text-anchor: middle;
        stroke: #191919;
        stroke-width: 2px;
        paint-order: stroke;
    }

    .pages {
        position: relative;
        flex: 1;
        overflow: hidden;
        padding-right: 17px;
    }

    .sheet {
        box-sizing: border-box;
        width: 1145px;
        margin: 0 auto;
        border: 1px solid #6e6e6e;
        background: #fff;
        box-shadow: 0 2px 5px rgb(160 160 160 / 40%);
        color: #000;
    }

    .first {
        border-top: 0;
        padding: 16px 0 116px;
    }

    .second {
        margin-top: 24px;
        padding-top: 116px;
    }

    .text {
        padding: 0 168px 0 169px;
        font-family: "DejaVu Serif Condensed", "DejaVu Serif", serif;
        font-size: 19px;
        line-height: 28px;
        white-space: nowrap;
    }

    .text p {
        margin: 0;
    }

    .text h2 {
        margin: 17px 0 18px;
        font-size: inherit;
    }

    .misspelt {
        text-decoration: underline wavy #d03030 1px;
        text-decoration-skip-ink: none;
        text-underline-offset: -2px;
    }

    .marks {
        display: flex;
        justify-content: space-between;
        padding: 0 149px;
    }

    .marks span {
        box-sizing: border-box;
        width: 20px;
        height: 20px;
        border: 0 solid #c0c0c0;
    }

    .marks.bottom {
        margin-top: 8px;
    }

    .marks.top {
        margin-bottom: -3px;
    }

    .marks span:first-child {
        border-right-width: 1px;
    }

    .marks span:last-child {
        border-left-width: 1px;
    }

    .bottom span {
        border-top-width: 1px;
    }

    .top span {
        border-bottom-width: 1px;
    }

    .scroll-thumb {
        position: absolute;
        right: 7px;
        bottom: 123px;
        width: 2px;
        height: 80px;
        background: #9a9a9a;
    }

    .sidebar {
        position: relative;
        display: flex;
        flex-direction: column;
        align-items: center;
        box-sizing: border-box;
        width: 47px;
        padding-left: 6px;
    }

    .deck-menu {
        display: grid;
        place-items: center;
        width: 28px;
        height: 27px;
        padding-top: 2px;
    }

    .deck {
        display: grid;
        place-items: center;
        width: 35px;
        height: 35px;
    }

    .grip {
        position: absolute;
        top: 406px;
        left: 0;
        width: 6px;
        height: 73px;
        background: #fff;
    }

    /* Status bar */
    .status {
        display: grid;
        grid-template-columns: 32px 296fr 345fr 46px 295fr 272fr 69px 46px 30px 211fr 88px 144px 46px;
        align-items: center;
        height: 21px;
        border-top: 1px solid #fafafa;
        border-bottom: 1px solid #484848;
    }

    .cell {
        display: flex;
        align-items: center;
        box-sizing: border-box;
        height: 17px;
        padding-left: 9px;
        border-right: 1px solid #3c3c3c;
        white-space: nowrap;
    }

    .cell:last-child {
        border-right: 0;
    }

    .center {
        justify-content: center;
        padding-left: 0;
    }

    .insert-mode,
    .save-state {
        padding-left: 10px;
    }

    .views {
        gap: 6px;
        padding-left: 8px;
    }

    .zoom {
        justify-content: space-between;
        padding: 0 5px 0 10px;
    }

    .zoom input {
        width: 98px;
        height: 10px;
        margin: 0;
        appearance: none;
        background:
            linear-gradient(#fafafa, #fafafa) 35px 50% / 2px 6px no-repeat,
            linear-gradient(#fafafa, #fafafa) 47px 50% / 2px 6px no-repeat,
            linear-gradient(#fafafa, #fafafa) 0 50% / 100% 2px no-repeat;
    }

    .zoom input::-webkit-slider-thumb {
        appearance: none;
        box-sizing: border-box;
        width: 4px;
        height: 10px;
        border: 1px solid #fafafa;
        background: #555;
    }

    /* Taskbar */
    .taskbar {
        display: grid;
        grid-template-columns: 1fr auto 1fr;
        align-items: center;
        height: 46px;
        padding-bottom: 1px;
        background: #202020;
    }

    .weather {
        display: flex;
        align-items: center;
        gap: 10px;
        padding-left: 21px;
        text-align: left;
    }

    .weather b,
    .weather small {
        display: block;
        font-size: 12px;
        font-weight: 400;
        line-height: 16px;
    }

    .weather small {
        color: #b8b8b8;
    }

    .dock {
        display: flex;
        align-items: center;
        padding-left: 1px;
    }

    .app {
        position: relative;
        display: grid;
        place-items: center;
        width: 44px;
        height: 40px;
    }

    .current::before {
        content: "";
        position: absolute;
        inset: 0 2px;
        border-radius: 4px;
        background: #2d2d2d;
    }

    .app .glyph {
        position: relative;
    }

    .run::after,
    .current::after {
        content: "";
        position: absolute;
        bottom: 1px;
        left: 19px;
        width: 6px;
        height: 3px;
        border-radius: 2px;
        background: #9a9a9a;
    }

    .current::after {
        left: 14px;
        width: 16px;
        background: #4cb4e8;
    }

    .search {
        display: flex;
        align-items: center;
        box-sizing: border-box;
        width: 220px;
        height: 32px;
        margin: 0 2px;
        padding: 0 5px 0 11px;
        border: 1px solid #484848;
        border-radius: 16px;
        background: #3a3a3a;
    }

    .search input {
        flex: 1;
        min-width: 0;
        padding: 0 0 0 9px;
        border: 0;
        outline: 0;
        background: none;
        color: #fff;
        font: inherit;
        font-size: 14px;
    }

    .search input::placeholder {
        color: #c8c8c8;
        opacity: 1;
    }

    .tray {
        display: flex;
        align-items: center;
        justify-content: flex-end;
        gap: 16px;
        padding-right: 21px;
    }

    .net {
        display: flex;
        align-items: center;
        gap: 8px;
    }

    .clock {
        display: flex;
        flex-direction: column;
        align-items: flex-end;
        margin: 0 -7px 0 -2px;
        font-size: 12px;
        line-height: 16px;
    }
</style>
